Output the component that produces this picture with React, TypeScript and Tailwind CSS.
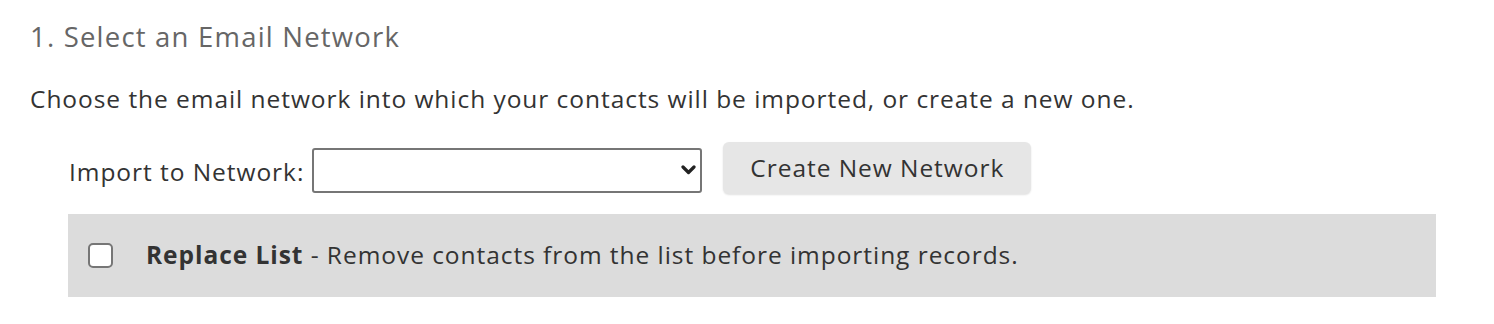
import { useState } from "react"

export default function App() {
  const [replace, setReplace] = useState(false)

  return (
    <div className="bg-white min-h-[324px] pl-[30px] pt-[19px] font-['Open_Sans',sans-serif] text-[#333]">
      {/* Step heading */}
      <h2 className="text-[27.5px] leading-[36px] text-[#666] tracking-[1.2px]">1. Select an Email Network</h2>

      <p className="mt-[29px] text-[24.5px] leading-[30px] tracking-[0.95px]">
        Choose the email network into which your contacts will be imported, or create a new one.
      </p>

      {/* Network picker */}
      <div className="mt-[28px] ml-[39px] flex items-start">
        <label className="text-[24.5px] leading-[30px] tracking-[0.95px] mr-[8px] mt-[15px]">Import to Network:</label>
        <div className="relative mt-[6px]">
          <select className="appearance-none w-[390px] h-[45px] rounded-[3px] border-2 border-[#767676] bg-white pl-2 pr-10 text-[20px] outline-none">
            <option value=""></option>
          </select>
          <svg
            className="pointer-events-none absolute right-[6px] top-[17px] h-[10px] w-[15px]"
            viewBox="0 0 15 10"
            fill="none"
          >
            <path d="M2 2l5.5 5.5L13 2" stroke="#222" strokeWidth="3.2" strokeLinecap="round" strokeLinejoin="round" />
          </svg>
        </div>
        <button className="ml-[21px] h-[52px] w-[308px] rounded-[6px] bg-[#e6e6e6] shadow-[0_1px_2px_rgba(0,0,0,0.12)] text-[24.5px] tracking-[0.95px] text-[#333]">
          Create New Network
        </button>
      </div>

      {/* Replace list option */}
      <div className="mt-[20px] ml-[38px] w-[1368px] h-[83px] bg-[#dcdcdc] flex items-center pl-[20px]">
        <button
          onClick={() => setReplace(!replace)}
          className="h-[25px] w-[25px] rounded-[5px] border-2 border-[#767676] bg-white flex items-center justify-center"
        >
          {replace && (
            <svg viewBox="0 0 16 16" className="h-4 w-4">
              <path d="M3 8l3.5 3.5L13 4" stroke="#333" strokeWidth="2.5" fill="none" />
            </svg>
          )}
        </button>
        <span className="ml-[33px] text-[24.5px] tracking-[0.95px]">
          <span className="font-bold">Replace List</span> - Remove contacts from the list before importing records.
        </span>
      </div>
    </div>
  )
}
